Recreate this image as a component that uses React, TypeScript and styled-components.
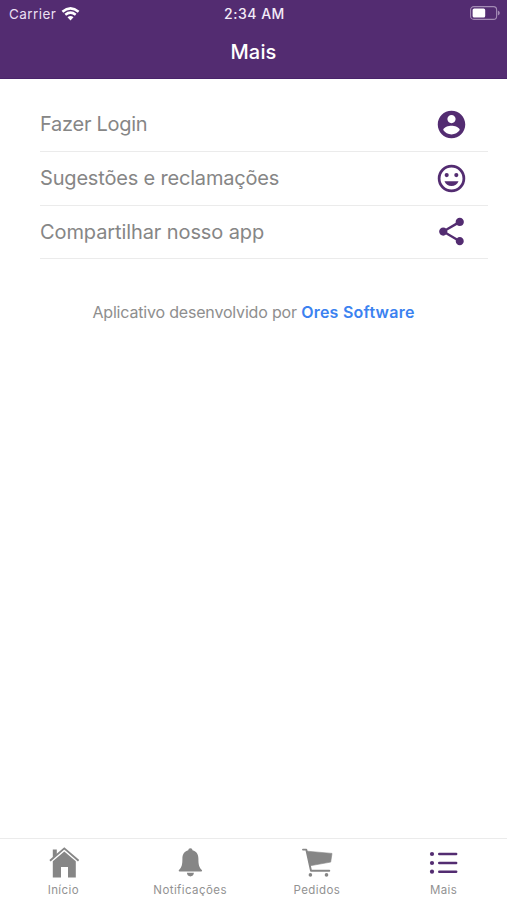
import React from "react";
import styled, { createGlobalStyle } from "styled-components";

const PURPLE = "#532c71";
const GRAY = "#868686";

const GlobalStyle = createGlobalStyle`
  * { box-sizing: border-box; }
  body { margin: 0; background: #fff; }
`;

const Screen = styled.div`
  width: 507px;
  height: 900px;
  display: flex;
  flex-direction: column;
  background: #fff;
  font-family: Inter, "Liberation Sans", sans-serif;
  color: ${GRAY};
  overflow: hidden;
`;

const Header = styled.header`
  height: 79px;
  background: ${PURPLE};
  border-bottom: 1px solid #49236a;
  color: #fff;
`;

const StatusBar = styled.div`
  height: 27px;
  padding: 0 7px 0 9px;
  display: grid;
  grid-template-columns: 1fr auto 1fr;
  align-items: center;
`;

const Carrier = styled.div`
  display: flex;
  align-items: center;
  gap: 5px;
  font-size: 13.5px;
  letter-spacing: 0.45px;
  color: #eadff2;
`;

const Clock = styled.div`
  font-size: 14px;
  font-weight: 500;
  letter-spacing: 0.5px;
  color: #f3ebf8;
`;

const Battery = styled.div`
  display: flex;
  justify-content: flex-end;
  margin-top: -1px;
`;

const Title = styled.h1`
  margin: 0;
  height: 51px;
  line-height: 51px;
  text-align: center;
  font-size: 20px;
  font-weight: 500;
  letter-spacing: 0.2px;
  color: #fff;
`;

const Menu = styled.ul`
  list-style: none;
  margin: 19px 19px 0 40px;
  padding: 0;
`;

const MenuItem = styled.li`
  height: 53.8px;
  display: flex;
  align-items: center;
  justify-content: space-between;
  padding-right: 20px;
  border-bottom: 1px solid #ebebeb;
  color: ${PURPLE};
`;

const MenuLabel = styled.span<{ $spacing: number }>`
  font-size: 20px;
  letter-spacing: ${(p) => p.$spacing}px;
  color: ${GRAY};
  white-space: nowrap;
`;

const Credit = styled.p`
  margin: 41.5px 0 0;
  text-align: center;
  font-size: 16px;
  line-height: 22px;
  letter-spacing: -0.18px;
  color: #8e8e8e;
`;

const CreditLink = styled.span`
  font-weight: 600;
  letter-spacing: 0.24px;
  color: #3b82f0;
`;

const TabBar = styled.nav`
  margin-top: auto;
  height: 62px;
  display: grid;
  grid-template-columns: repeat(4, 1fr);
  border-top: 1px solid #ebebeb;
`;

const Tab = styled.div<{ $active?: boolean }>`
  display: flex;
  flex-direction: column;
  align-items: center;
  padding-top: 8px;
  color: ${(p) => (p.$active ? PURPLE : GRAY)};
`;

const TabLabel = styled.span`
  margin-top: 3px;
  font-size: 11.5px;
  line-height: 16px;
  letter-spacing: 0.42px;
  color: #929292;
`;

const WifiIcon = () => (
  <svg width="19" height="14" viewBox="0 0 18 14" fill="none" stroke="#fff" strokeWidth="2.5">
    <path d="M.9 4.7Q9-2 17.1 4.7M3.8 7.8q5.2-4.3 10.4 0" />
    <path d="M6 10.2q3-2.5 6 0L9 13.4Z" fill="#fff" stroke="none" />
  </svg>
);

const BatteryIcon = () => (
  <svg width="30" height="14" viewBox="0 0 30 14">
    <rect x=".6" y=".6" width="26" height="12.8" rx="3.2" fill="none" stroke="#a48bb5" strokeWidth="1.1" />
    <rect x="2.6" y="2.5" width="12.6" height="9" rx="1.6" fill="#fff" />
    <path d="M27.8 4.5c2.6 1.2 2.6 3.8 0 5Z" fill="#a48bb5" />
  </svg>
);

const AccountIcon = () => (
  <svg width="33" height="33" viewBox="0 0 24 24" fill="currentColor">
    <path d="M12 2C6.48 2 2 6.48 2 12s4.48 10 10 10 10-4.48 10-10S17.52 2 12 2zm0 3c1.66 0 3 1.34 3 3s-1.34 3-3 3-3-1.34-3-3 1.34-3 3-3zm0 14.2c-2.5 0-4.71-1.28-6-3.22.03-1.99 4-3.08 6-3.08 1.99 0 5.97 1.09 6 3.08-1.29 1.94-3.5 3.22-6 3.22z" />
  </svg>
);

const SmileIcon = () => (
  <svg width="33" height="33" viewBox="0 0 24 24" fill="currentColor">
    <circle cx="12" cy="12" r="9" fill="none" stroke="currentColor" strokeWidth="2" />
    <circle cx="8.5" cy="9.5" r="1.5" />
    <circle cx="15.5" cy="9.5" r="1.5" />
    <path d="M12 17.5c2.33 0 4.3-1.46 5.11-3.5H6.89c.8 2.04 2.78 3.5 5.11 3.5z" />
  </svg>
);

const ShareIcon = () => (
  <svg width="33" height="33" viewBox="0 0 24 24" fill="currentColor">
    <path d="M18 16.08c-.76 0-1.44.3-1.96.77L8.91 12.7c.05-.23.09-.46.09-.7s-.04-.47-.09-.7l7.05-4.11c.54.5 1.25.81 2.04.81 1.66 0 3-1.34 3-3s-1.34-3-3-3-3 1.34-3 3c0 .24.04.47.09.7L8.04 9.81C7.5 9.31 6.79 9 6 9c-1.66 0-3 1.34-3 3s1.34 3 3 3c.79 0 1.5-.31 2.04-.81l7.12 4.16c-.05.21-.08.43-.08.65 0 1.61 1.31 2.92 2.92 2.92 1.61 0 2.92-1.31 2.92-2.92s-1.31-2.92-2.92-2.92z" />
  </svg>
);

const HomeIcon = () => (
  <svg width="32" height="32" viewBox="-1 0 32 32">
    <path d="M4.8 10.7V2.5h4v4.6Z" fill="currentColor" />
    <path d="M2 13.7 16.3 1.4 30.6 13.7" fill="none" stroke="currentColor" strokeWidth="1.9" />
    <path d="M4.8 14.2 16.3 4.5l11.5 9.7V30.4H20V20h-7v10.4H4.8Z" fill="currentColor" />
  </svg>
);

const BellIcon = () => (
  <svg width="32" height="32" viewBox="-.4 0 32 32" fill="currentColor">
    <path d="M16 1.2c-1.3 0-2 .8-2.1 2C9.8 4.2 8 7.5 8 11.7c0 6.2-.7 8.4-3.4 11.3-.6.6-.2 1.5.5 1.5h21.8c.7 0 1.1-.9.5-1.5C24.7 20.1 24 17.9 24 11.7c0-4.2-1.8-7.5-5.9-8.5-.1-1.2-.8-2-2.1-2Z" />
    <path d="M12.5 25.8h7c-.2 2.3-1.5 3.6-3.5 3.6s-3.3-1.3-3.5-3.6Z" />
  </svg>
);

const CartIcon = () => (
  <svg width="32" height="32" viewBox="0 0 32 32">
    <path d="M2 2.6h3.3L10 23.8h18.3" fill="none" stroke="currentColor" strokeWidth="1.9" strokeLinecap="round" strokeLinejoin="round" />
    <path d="M6 4.2 31 6.4 29.7 15.1 9 18.8Z" fill="currentColor" stroke="currentColor" strokeWidth=".6" strokeLinejoin="round" />
    <circle cx="9.4" cy="27.9" r="1.8" fill="currentColor" />
    <circle cx="25.5" cy="27.9" r="1.8" fill="currentColor" />
  </svg>
);

const ListIcon = () => (
  <svg width="32" height="32" viewBox="0 0 32 32" fill="currentColor">
    {[7, 16, 24.7].map((y) => (
      <g key={y}>
        <circle cx="4" cy={y} r="2.1" />
        <rect x="10" y={y - 1.2} width="19.4" height="2.4" rx="1.2" />
      </g>
    ))}
  </svg>
);

const menu = [
  { label: "Fazer Login", spacing: -0.27, Icon: AccountIcon },
  { label: "Sugestões e reclamações", spacing: -0.18, Icon: SmileIcon },
  { label: "Compartilhar nosso app", spacing: -0.1, Icon: ShareIcon },
];

const tabs = [
  { label: "Início", Icon: HomeIcon },
  { label: "Notificações", Icon: BellIcon },
  { label: "Pedidos", Icon: CartIcon },
  { label: "Mais", Icon: ListIcon, active: true },
];

export default function App() {
  return (
    <Screen>
      <GlobalStyle />
      <Header>
        <StatusBar>
          <Carrier>
            Carrier
            <WifiIcon />
          </Carrier>
          <Clock>2:34 AM</Clock>
          <Battery>
            <BatteryIcon />
          </Battery>
        </StatusBar>
        <Title>Mais</Title>
      </Header>
      <Menu>
        {menu.map(({ label, spacing, Icon }) => (
          <MenuItem key={label}>
            <MenuLabel $spacing={spacing}>{label}</MenuLabel>
            <Icon />
          </MenuItem>
        ))}
      </Menu>
      <Credit>
        Aplicativo desenvolvido por <CreditLink>Ores Software</CreditLink>
      </Credit>
      <TabBar>
        {tabs.map(({ label, Icon, active }) => (
          <Tab key={label} $active={active}>
            <Icon />
            <TabLabel>{label}</TabLabel>
          </Tab>
        ))}
      </TabBar>
    </Screen>
  );
}
